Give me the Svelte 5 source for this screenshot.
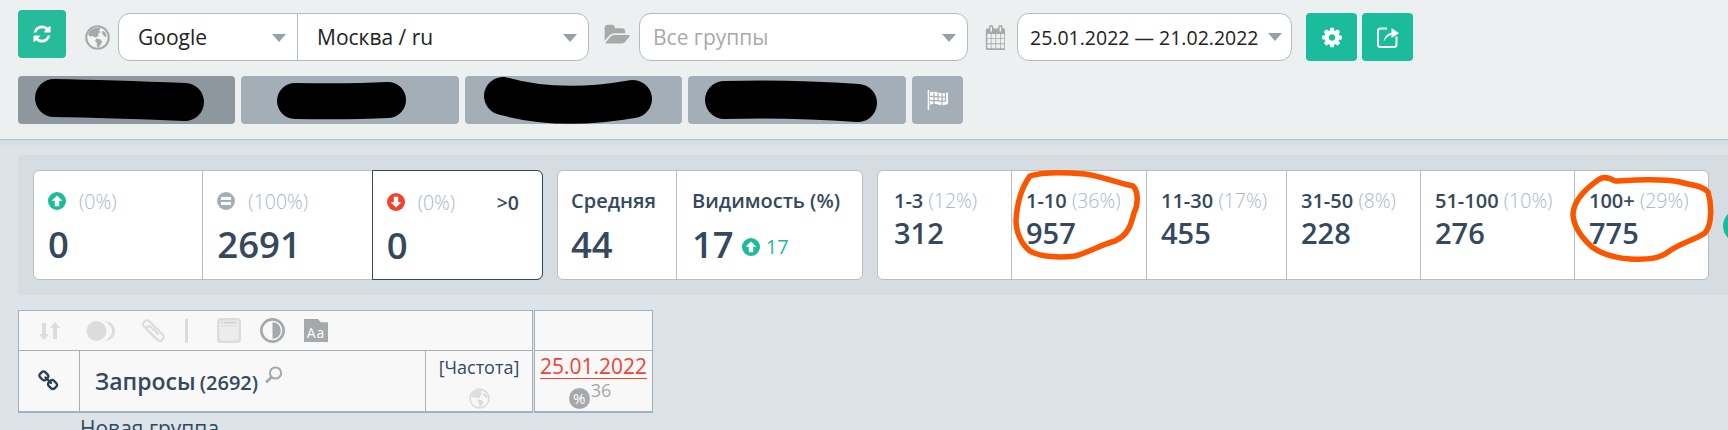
<script>
  const groups = [
    { cls: 'up', pct: '(0%)', value: '0' },
    { cls: 'same', pct: '(100%)', value: '2691' },
    { cls: 'down', pct: '(0%)', value: '0', extra: '>0' }
  ];
  const ranges = [
    { label: '1-3', pct: '(12%)', value: '312', w: 133 },
    { label: '1-10', pct: '(36%)', value: '957', w: 135 },
    { label: '11-30', pct: '(17%)', value: '455', w: 140 },
    { label: '31-50', pct: '(8%)', value: '228', w: 134 },
    { label: '51-100', pct: '(10%)', value: '276', w: 154 },
    { label: '100+', pct: '(29%)', value: '775', w: 136 }
  ];
  const tabs = [217, 218, 217, 218];
</script>

{#snippet arrowUp()}
  <svg class="round" width="18" height="18" viewBox="0 0 18 18">
    <circle cx="9" cy="9" r="9" fill="#1abc9c" />
    <path d="M9 3.4 14.4 8.8 11.2 8.8 11.2 14.2 6.8 14.2 6.8 8.8 3.6 8.8Z" fill="#fff" />
  </svg>
{/snippet}

{#snippet earth(size, ring, land, sea)}
  <svg width={size} height={size} viewBox="0 0 24 24">
    <circle cx="12" cy="12" r="10.8" fill={sea} stroke={ring} stroke-width="2" />
    <path d="M6 4.5C8 3 12 2 15 3L13.5 5 15 7 12.5 8.5 13 10.5 10 12 7.5 10.5 5 11 3 9C3.5 7.5 4.5 5.5 6 4.5ZM11 13 15 14 16.5 16 15 19 13 21.5 11.5 21 11.5 17.5 9.5 15ZM16.5 5.5 19 6.5 20.5 9 20.5 12 18.5 10.5 16.5 8.5Z" fill={land} />
  </svg>
{/snippet}

<header class="topbar">
  <div class="row">
    <button class="btn refresh" aria-label="refresh">
      <svg width="18" height="20" viewBox="0 0 1536 1792" fill="#fff"><path d="M1511 1056q0 5-1 7-64 268-268 434.5t-478 166.5q-146 0-282.5-55t-243.5-157l-129 129q-19 19-45 19t-45-19-19-45v-448q0-26 19-45t45-19h448q26 0 45 19t19 45-19 45l-137 137q71 66 161 102t187 36q134 0 250-65t186-179q11-17 53-117 8-23 30-23h192q13 0 22.5 9.5t9.5 22.5zm25-800v448q0 26-19 45t-45 19h-448q-26 0-45-19t-19-45 19-45l138-138q-148-137-349-137-134 0-250 65t-186 179q-11 17-53 117-8 23-30 23h-199q-13 0-22.5-9.5t-9.5-22.5v-7q65-268 270-434.5t480-166.5q146 0 284 55.5t245 156.5l130-129q19-19 45-19t45 19 19 45z" /></svg>
    </button>
    <span class="globe">{@render earth(25, '#a9a9a9', '#a9a9a9', '#f1f3f4')}</span>
    <div class="select engine">
      <span class="part google">Google<i class="caret"></i></span>
      <span class="part region">Москва / ru<i class="caret"></i></span>
    </div>
    <svg class="folder" width="27" height="24" viewBox="0 0 1920 1792" fill="#a9a9a9"><path d="M1879 952q0 31-31 66l-336 396q-43 51-120.5 86.5t-143.5 35.5h-1088q-34 0-60.5-13t-26.5-43q0-31 31-66l336-396q43-51 120.5-86.5t143.5-35.5h1088q34 0 60.5 13t26.5 43zm-343-344v160h-832q-94 0-197 47.5t-164 119.5l-337 396-5 6q0-4-.5-12.5t-.5-12.5v-960q0-92 66-158t158-66h320q92 0 158 66t66 158v32h544q92 0 158 66t66 158z" /></svg>
    <div class="select groups"><span class="part placeholder">Все группы<i class="caret"></i></span></div>
    <svg class="calendar" width="20" height="25" viewBox="0 0 1664 1792" fill="#a9a9a9" preserveAspectRatio="none"><path d="M192 1664h288v-288h-288v288zm352 0h320v-288h-320v288zm-352-352h288v-320h-288v320zm352 0h320v-320h-320v320zm-352-384h288v-288h-288v288zm736 736h320v-288h-320v288zm-384-736h320v-288h-320v288zm768 736h288v-288h-288v288zm-384-352h320v-320h-320v320zm-352-864v-288q0-13-9.5-22.5t-22.5-9.5h-64q-13 0-22.5 9.5t-9.5 22.5v288q0 13 9.5 22.5t22.5 9.5h64q13 0 22.5-9.5t9.5-22.5zm736 864h288v-320h-288v320zm-384-384h320v-288h-320v288zm384 0h288v-288h-288v288zm32-480v-288q0-13-9.5-22.5t-22.5-9.5h-64q-13 0-22.5 9.5t-9.5 22.5v288q0 13 9.5 22.5t22.5 9.5h64q13 0 22.5-9.5t9.5-22.5zm384-64v1280q0 52-38 90t-90 38h-1408q-52 0-90-38t-38-90v-1280q0-52 38-90t90-38h128v-96q0-66 47-113t113-47h64q66 0 113 47t47 113v96h384v-96q0-66 47-113t113-47h64q66 0 113 47t47 113v96h128q52 0 90 38t38 90z" /></svg>
    <div class="select dates"><span class="part date">25.01.2022 — 21.02.2022<i class="caret"></i></span></div>
    <button class="btn action first" aria-label="settings">
      <svg width="20" height="23" viewBox="0 0 1536 1792" fill="#fff"><path d="M1024 896q0-106-75-181t-181-75-181 75-75 181 75 181 181 75 181-75 75-181zm512-109v222q0 12-8 23t-20 13l-185 28q-19 54-39 91 35 50 107 138 10 12 10 25t-9 23q-27 37-99 108t-94 71q-12 0-26-9l-138-108q-44 23-91 38-16 136-29 186-7 28-36 28h-222q-14 0-24.5-8.5t-11.5-21.5l-28-184q-49-16-90-37l-141 107q-10 9-25 9-14 0-25-11-126-114-165-168-7-10-7-23 0-12 8-23 15-21 51-66.5t54-70.5q-27-50-41-99l-183-27q-13-2-21-12.5t-8-23.5v-222q0-12 8-23t19-13l186-28q14-46 39-92-40-57-107-138-10-12-10-24 0-10 9-23 26-36 98.5-107.5t94.5-71.5q13 0 26 10l138 107q44-23 91-38 16-136 29-186 7-28 36-28h222q14 0 24.5 8.5t11.5 21.5l28 184q49 16 90 37l142-107q9-9 24-9 13 0 25 10 129 119 165 170 7 8 7 22 0 12-8 23-15 21-51 66.5t-54 70.5q26 50 41 98l183 28q13 2 21 12.5t8 23.5z" /></svg>
    </button>
    <button class="btn action" aria-label="export">
      <svg width="24" height="24" viewBox="0 0 24 24" fill="none" stroke="#fff" stroke-width="2"><path d="M11 3.5H4.5Q2 3.5 2 6V19.5Q2 22 4.5 22H18Q20.5 22 20.5 19.5V11.5" /><path d="M7.5 17Q8.5 9 15.5 7.5V3L23 8.2 15.5 13V10Q11 10.5 7.5 17Z" fill="#fff" stroke="none" /></svg>
    </button>
  </div>
  <div class="row tabs">
    {#each tabs as w, i}
      <span class="tab" class:current={i === 0} style="width: {w}px"></span>
    {/each}
    <button class="tab flag" aria-label="flag">
      <svg width="22" height="22" viewBox="0 0 22 22"><path d="M1.5 1V21" stroke="#fff" stroke-width="1.6" /><path d="M3 3.5Q7 2 11 3.5T21 3.5V15Q16 17 11 15.5T3 16Z" fill="#fff" /><path d="M7 3.4V7.4H3M7 7.4V11.6H3M7 11.6V15.6M11 3.5V7.6H7M11 7.6V11.6H7M15 4.2V8H11M15 8V12.2H11M15 12.2V16.2M18.5 4V8H15M18.5 8V12.2H15" stroke="#a4aeb6" stroke-width="1.2" fill="none" /></svg>
    </button>
  </div>
</header>

<section class="panel">
  <div class="card movement">
    {#each groups as g}
      <div class="cell {g.cls}">
        <div class="head">
          {#if g.cls === 'up'}
            {@render arrowUp()}
          {:else if g.cls === 'same'}
            <svg class="round" width="18" height="18" viewBox="0 0 18 18"><circle cx="9" cy="9" r="9" fill="#a4aeb6" /><path d="M4 5H14V8H4ZM4 10H14V13H4Z" fill="#fff" /></svg>
          {:else}
            <svg class="round" width="18" height="18" viewBox="0 0 18 18"><circle cx="9" cy="9" r="9" fill="#f0432e" /><path d="M9 14.6 3.6 9.2 6.8 9.2 6.8 3.8 11.2 3.8 11.2 9.2 14.4 9.2Z" fill="#fff" /></svg>
          {/if}
          <span class="pct">{g.pct}</span>
          {#if g.extra}<span class="extra">{g.extra}</span>{/if}
        </div>
        <div class="big">{g.value}</div>
      </div>
    {/each}
  </div>

  <div class="card summary">
    <div class="cell avg">
      <div class="title">Средняя</div>
      <div class="big">44</div>
    </div>
    <div class="cell vis">
      <div class="title">Видимость (%)</div>
      <div class="big">17 <span class="delta">{@render arrowUp()} 17</span></div>
    </div>
  </div>

  <div class="card positions">
    {#each ranges as r}
      <div class="cell" style="width: {r.w}px">
        <div class="title">{r.label} <span class="pct">{r.pct}</span></div>
        <div class="mid">{r.value}</div>
      </div>
    {/each}
  </div>

  <span class="next"></span>
</section>

<section class="grid">
  <div class="col main">
    <div class="tools">
      <svg width="21" height="20" viewBox="0 0 21 20" fill="#dcdcdc"><path d="M5 19 0 13H3V2H7V13H10ZM16 1 21 7H18V18H14V7H11Z" /></svg>
      <svg class="moons" width="30" height="22" viewBox="0 0 30 22"><path d="M19 1A10 10 0 0 1 19 21Q26 16 26 11T19 1Z" fill="#dcdcdc" /><circle cx="10.5" cy="11" r="10" fill="#dcdcdc" /></svg>
      <svg class="clip" width="24" height="24" viewBox="0 0 24 24" fill="none" stroke="#dcdcdc" stroke-width="2.2" stroke-linecap="round"><path d="M17 21 3.5 8Q0.5 5 3.5 2.5T9 3L22 16Q23.5 18 21.5 20.5T17 21Q15 20 11 16L6 10.5Q5 8.5 6.5 7.5T10 8L17 15" /></svg>
      <span class="sep"></span>
      <svg class="win" width="24" height="25" viewBox="0 0 24 25"><rect x="1.2" y="1.2" width="21.6" height="22.6" rx="2.5" fill="#ececec" stroke="#dcdcdc" stroke-width="2.4" /><path d="M3.5 8H20.5" stroke="#dcdcdc" /><path d="M4 4.6H5.6M7.5 4.6H19" stroke="#cfcfcf" stroke-width="1.6" /></svg>
      <svg class="half" width="25" height="25" viewBox="0 0 24 24"><circle cx="12" cy="12" r="10.7" fill="#f8f8f8" stroke="#a4a9ab" stroke-width="2.6" /><path d="M12 4A8 8 0 0 1 12 20Z" fill="#a4a9ab" /></svg>
      <span class="aa">Aa</span>
    </div>
    <div class="heads">
      <div class="linkcell">
        <svg width="22" height="22" viewBox="0 0 1792 1792" fill="#2c3e50"><path d="M1456 1216q0-40-28-68l-208-208q-28-28-68-28-42 0-72 32 3 3 19 18.5t21.5 21.5 15 19 13 25.5 3.5 27.5q0 40-28 68t-68 28q-15 0-27.5-3.5t-25.5-13-19-15-21.5-21.5-18.5-19q-33 31-33 73 0 40 28 68l206 207q27 27 68 27 40 0 68-26l147-146q28-28 28-67zm-703-705q0-40-28-68l-206-207q-28-28-68-28-39 0-68 27l-147 146q-28 28-28 67 0 40 28 68l208 208q27 27 68 27 42 0 72-31-3-3-19-18.5t-21.5-21.5-15-19-13-25.5-3.5-27.5q0-40 28-68t68-28q15 0 27.5 3.5t25.5 13 19 15 21.5 21.5 18.5 19q33-31 33-73zm895 705q0 120-85 203l-147 146q-83 83-203 83-121 0-204-85l-206-207q-83-83-83-203 0-123 88-209l-88-88q-86 88-208 88-120 0-204-84l-208-208q-84-84-84-204t85-203l147-146q83-83 203-83 121 0 204 85l206 207q83 83 83 203 0 123-88 209l88 88q86-88 208-88 120 0 204 84l208 208q84 84 84 204z" /></svg>
      </div>
      <div class="querycell">
        <span class="q">Запросы</span> <span class="qcount">(2692)</span>
        <svg class="search" width="18" height="18" viewBox="0 0 18 18" fill="none" stroke="#a4a9ab" stroke-width="2"><circle cx="10.5" cy="7" r="5.6" /><path d="M6.5 11 1 16.5" stroke-width="2.6" /></svg>
      </div>
      <div class="freqcell">
        <span>[Частота]</span>
        {@render earth(21, '#dcdcdc', '#dcdcdc', '#f8f8f8')}
      </div>
    </div>
  </div>
  <div class="col datecol">
    <div class="blank"></div>
    <div class="datecell">
      <a href="#top" class="datelink">25.01.2022</a>
      <div class="sub">
        <span class="percent">%</span><span class="num">36</span>
      </div>
    </div>
  </div>
</section>
<div class="newgroup">Новая группа</div>

<svg class="marks" width="1728" height="430" viewBox="0 0 1728 430" fill="none" aria-hidden="true">
  <g stroke="#000" stroke-linecap="round" stroke-linejoin="round">
    <path d="M54 98Q110 99 185 102" stroke-width="38" />
    <path d="M295 101Q350 102 388 100" stroke-width="36" />
    <path d="M503 96Q560 112 633 99" stroke-width="38" />
    <path d="M724 100Q790 98 858 103" stroke-width="38" />
  </g>
  <g stroke="#fb5500" stroke-width="5.5" stroke-linecap="round" stroke-linejoin="round">
    <path d="M1030 176C1042 172 1062 172 1085 174C1105 177 1120 184 1133 186C1139 192 1138 205 1134 213C1131 225 1128 235 1115 241C1100 245 1090 252 1075 256C1060 258 1040 257 1030 251C1021 244 1016 232 1016 220C1017 205 1021 188 1030 176Z" />
    <path d="M1598 180C1603 176 1610 178 1615 181C1635 180 1660 178 1680 182C1695 186 1703 186 1708 192C1712 205 1712 225 1705 233C1695 240 1680 243 1668 252C1660 258 1650 260 1630 259C1615 258 1603 255 1592 247C1582 238 1574 228 1573 215C1573 202 1584 190 1598 180Z" />
  </g>
</svg>

<style>
  :global(body) {
    background: #dce4ea;
    font-family: "Open Sans", "Noto Sans", sans-serif;
    color: #34495e;
    height: 430px;
    overflow: hidden;
    position: relative;
  }

  .topbar {
    box-sizing: border-box;
    height: 140px;
    background: #ecf0f1;
    border-bottom: 1px solid #b6bdc3;
    padding: 13px 18px 0;
    box-shadow: 0 2px 6px rgba(52, 73, 94, 0.08);
  }

  .row {
    display: flex;
    align-items: flex-start;
  }

  .btn {
    border: none;
    border-radius: 4px;
    background: #1abc9c;
    padding: 0;
    display: flex;
    align-items: center;
    justify-content: center;
  }

  .refresh {
    width: 48px;
    height: 48px;
    margin-top: -3px;
    background: #26bb9a;
  }

  .globe {
    display: block;
    height: 25px;
    margin: 12px 8px 0 19px;
  }

  .folder {
    margin: 10px 8px 0 15px;
  }

  .calendar {
    margin: 12px 12px 0 17px;
  }

  .select {
    box-sizing: border-box;
    height: 48px;
    display: flex;
    background: #fff;
    border: 1px solid #b3bac0;
    border-radius: 12px;
    font-size: 21px;
    color: #222;
    overflow: hidden;
    white-space: nowrap;
  }

  .part {
    position: relative;
    display: flex;
    align-items: center;
    box-sizing: border-box;
  }

  .caret {
    position: absolute;
    right: 11px;
    top: 20px;
    border-left: 7px solid transparent;
    border-right: 7px solid transparent;
    border-top: 8px solid #95a0a8;
  }

  .engine {
    width: 471px;
  }

  .google {
    width: 179px;
    padding-left: 19px;
    border-right: 1px solid #b3bac0;
  }

  .region {
    flex: 1;
    padding-left: 19px;
  }

  .groups {
    width: 329px;
  }

  .placeholder {
    flex: 1;
    padding-left: 13px;
    color: #a9a9a9;
  }

  .dates {
    width: 275px;
  }

  .date {
    flex: 1;
    padding-left: 12px;
    font-size: 19.5px;
  }

  .date .caret {
    right: 9px;
    top: 19px;
  }

  .action {
    width: 51px;
    height: 48px;
    margin-left: 5px;
  }

  .first {
    margin-left: 14px;
  }

  .tabs {
    margin-top: 15px;
    gap: 6px;
  }

  .tab {
    display: block;
    height: 48px;
    border-radius: 4px;
    background: #a4aeb6;
  }

  .current {
    background: #8e979e;
  }

  .flag {
    width: 51px;
    border: none;
    padding: 0;
    display: flex;
    align-items: center;
    justify-content: center;
  }

  .panel {
    box-sizing: border-box;
    height: 140px;
    margin: 15px 0 0 18px;
    padding: 15px 0 0 15px;
    background: #d5dde3;
    border-radius: 4px 0 0 4px;
    display: flex;
    gap: 14px;
    overflow: hidden;
  }

  .card {
    box-sizing: border-box;
    height: 110px;
    display: flex;
    flex-shrink: 0;
    background: #fff;
    border: 1px solid #b8bdc2;
    border-radius: 6px;
  }

  .cell {
    box-sizing: border-box;
    border-left: 1px solid #b8bdc2;
  }

  .cell:first-child {
    border-left: none;
  }

  .movement {
    width: 510px;
  }

  .movement .cell {
    width: 170px;
    padding: 19px 14px 0;
  }

  .movement .cell:first-child {
    width: 169px;
  }

  .movement .down {
    margin: -1px -1px -1px 0;
    width: 172px;
    padding-top: 20px;
    border: 1px solid #34495e;
    border-radius: 0 6px 6px 0;
  }

  .head {
    display: flex;
    align-items: center;
    gap: 13px;
    height: 22px;
    font-size: 19.5px;
    font-weight: 300;
  }

  .pct {
    color: #a9b7c6;
    font-weight: 300;
    font-size: 19.5px;
  }

  .extra {
    margin-left: auto;
    margin-right: 9px;
    font-weight: 600;
    color: #34495e;
  }

  .big {
    font-size: 36.5px;
    font-weight: 600;
    line-height: 46px;
    margin-top: 9px;
  }

  .summary {
    width: 306px;
  }

  .summary .cell {
    padding: 19px 13px 0;
  }

  .avg {
    width: 118px;
  }

  .vis {
    flex: 1;
    padding-left: 15px !important;
  }

  .title {
    font-size: 20px;
    font-weight: 600;
    line-height: 22px;
    white-space: nowrap;
  }

  .summary .big {
    margin-top: 9px;
    display: flex;
    align-items: center;
  }

  .delta {
    display: inline-flex;
    align-items: center;
    gap: 6px;
    margin-left: 8px;
    font-size: 20px;
    font-weight: 400;
    color: #1abc9c;
    line-height: 1;
    margin-top: 6px;
  }

  .positions {
    width: 832px;
  }

  .positions .cell {
    padding: 19px 14px 0;
    flex-shrink: 0;
  }

  .positions .cell:first-child {
    padding-left: 16px;
  }

  .mid {
    font-size: 29px;
    font-weight: 600;
    line-height: 40px;
    margin-top: 1px;
  }

  .next {
    flex-shrink: 0;
    width: 34px;
    height: 34px;
    margin-top: 39px;
    border-radius: 50%;
    background: #1abc9c;
  }

  .grid {
    display: flex;
    gap: 1px;
    margin: 15px 0 0 18px;
    align-items: flex-start;
  }

  .col {
    box-sizing: border-box;
    background: #f8f8f8;
    border: 1px solid #a4b0ba;
    border-bottom-width: 2px;
  }

  .main {
    width: 515px;
  }

  .tools {
    box-sizing: border-box;
    height: 40px;
    display: flex;
    align-items: center;
    padding-left: 20px;
    border-bottom: 1px solid #a4b0ba;
  }

  .moons {
    margin-left: 26px;
  }

  .clip {
    margin-left: 25px;
  }

  .sep {
    width: 3px;
    height: 24px;
    margin-left: 20px;
    background: #dcdcdc;
  }

  .win {
    margin-left: 29px;
  }

  .half {
    margin-left: 19px;
  }

  .aa {
    box-sizing: border-box;
    width: 24px;
    height: 23px;
    margin-left: 19px;
    padding-top: 5px;
    text-align: center;
    font-size: 14px;
    line-height: 18px;
    letter-spacing: 1px;
    color: #fff;
    background: #a4a9ab;
    clip-path: polygon(0 0, 58% 0, 70% 14%, 100% 14%, 100% 100%, 0 100%);
  }

  .heads {
    display: flex;
    height: 60px;
  }

  .linkcell {
    width: 60px;
    border-right: 1px solid #a4b0ba;
    display: flex;
    align-items: center;
    justify-content: center;
  }

  .querycell {
    flex: 1;
    padding: 14px 0 0 15px;
    white-space: nowrap;
  }

  .q {
    font-size: 23px;
    font-weight: 600;
  }

  .qcount {
    font-size: 20px;
    font-weight: 600;
  }

  .search {
    margin-left: 3px;
    vertical-align: 6px;
  }

  .freqcell {
    box-sizing: border-box;
    width: 107px;
    border-left: 1px solid #a4b0ba;
    display: flex;
    flex-direction: column;
    align-items: center;
    padding-top: 4px;
    font-size: 18px;
    line-height: 24px;
    gap: 9px;
  }

  .datecol {
    width: 119px;
  }

  .blank {
    box-sizing: border-box;
    height: 40px;
    border-bottom: 1px solid #a4b0ba;
  }

  .datecell {
    height: 60px;
    text-align: center;
    padding-top: 4px;
    box-sizing: border-box;
  }

  .datelink {
    display: inline-block;
    font-size: 21px;
    line-height: 23px;
    color: #f0432e;
    text-decoration: none;
    border-bottom: 1px solid #f0432e;
  }

  .sub {
    display: flex;
    justify-content: center;
    padding-right: 7px;
  }

  .percent {
    width: 21px;
    height: 21px;
    margin-top: 9px;
    border-radius: 50%;
    background: #a4a9ab;
    color: #fff;
    font-size: 15px;
    line-height: 21px;
  }

  .num {
    font-size: 18px;
    line-height: 22px;
    color: #a4a9ab;
    margin-left: 1px;
  }

  .newgroup {
    margin: 1px 0 0 80px;
    font-size: 21px;
    color: #34495e;
  }

  .marks {
    position: absolute;
    left: 0;
    top: 0;
    pointer-events: none;
  }
</style>
